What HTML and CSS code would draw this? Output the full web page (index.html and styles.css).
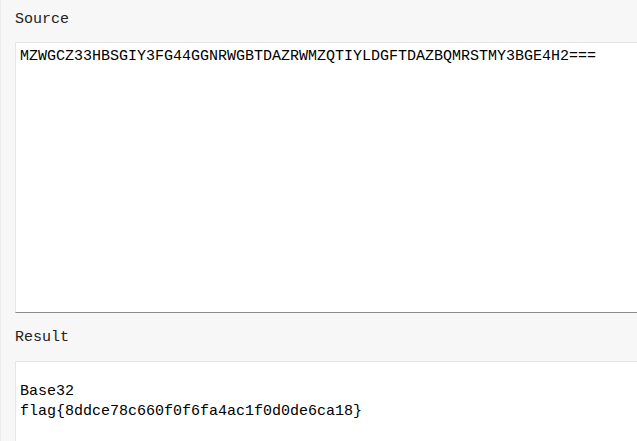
FILE: index.html
```html
<!DOCTYPE html>
<html>
<head>
<meta charset="utf-8">
<link rel="stylesheet" href="styles.css">
</head>
<body>
<div class="page">
  <section class="section source">
    <div class="label">Source</div>
    <div class="box source-box">MZWGCZ33HBSGIY3FG44GGNRWGBTDAZRWMZQTIYLDGFTDAZBQMRSTMY3BGE4H2===</div>
  </section>
  <section class="section result">
    <div class="label">Result</div>
    <div class="box result-box"><div class="spacer"></div><div class="line">Base32</div><div class="line">flag{8ddce78c660f0f6fa4ac1f0d0de6ca18}</div></div>
  </section>
</div>
</body>
</html>
```
FILE: styles.css
```css
html, body {
  margin: 0;
  padding: 0;
  height: 100%;
  overflow: hidden;
}
body {
  background: #f7f7f7;
  font-family: "Liberation Mono", "DejaVu Sans Mono", monospace;
  font-size: 15px;
  line-height: 20px;
  color: #111;
}
.page {
  height: 100%;
  border-left: 1px solid #ececec;
  padding-left: 14px;
  display: flex;
  flex-direction: column;
}
.section {
  display: flex;
  flex-direction: column;
}
.source {
  padding-top: 10px;
}
.label {
  height: 20px;
  margin-bottom: 12px;
  color: #222;
}
.result .label {
  margin-top: 15px;
  margin-bottom: 13px;
}
.box {
  background: #fff;
  border-top: 1px solid #e6e6e6;
  border-left: 1px solid #e6e6e6;
  padding: 4px 4px;
  white-space: pre;
  color: #000;
}
.source-box {
  height: 261px;
  border-bottom: 1px solid #8a8a8a;
}
.result {
  flex: 1;
}
.result-box {
  flex: 1;
}
.spacer {
  height: 16px;
}
```
